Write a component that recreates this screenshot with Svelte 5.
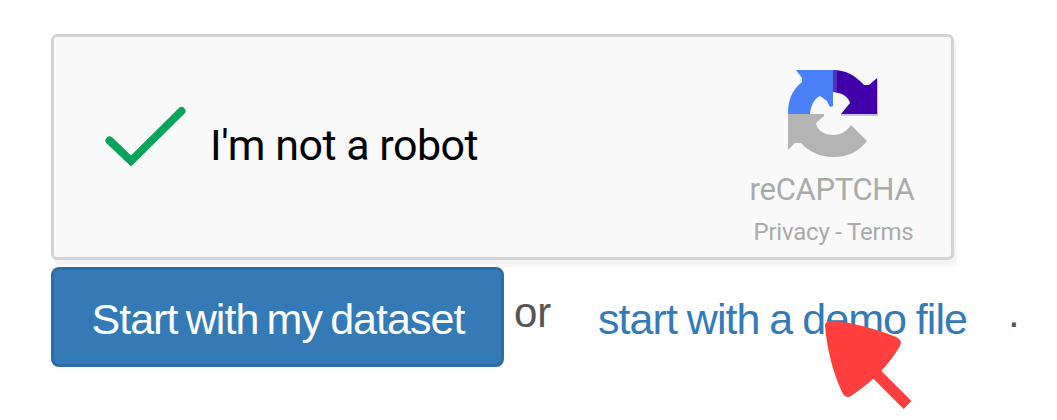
<script>
  const brand = 'reCAPTCHA';
</script>

<main>
  <section class="captcha">
    <svg class="check" width="90" height="72" viewBox="0 0 90 72" aria-hidden="true">
      <path d="M7.500 36.500L29 57L79.500 7" />
    </svg>
    <span class="label">I'm not a robot</span>
    <div class="brand">
      <svg class="logo" width="92" height="90" viewBox="0 0 92 90" aria-hidden="true">
        <path fill="#4a80f8" d="M9 0H46V36L43 37L40 31L33 26C27 29 24 35 23 44H1C1 30 5 20 15 12L15 8Z" />
        <path fill="#4100aa" d="M46 0C58 0 68 5 77 15H82L90 8V44H54L63 33C61 26 55 23 46 22Z" />
        <path fill="#c9bfdf" d="M54 44H90V46H54ZM90 9H91V46H90Z" />
        <path fill="#5a4cc4" d="M46 0H50V22H46Z" opacity=".65" />
        <path fill="#b4b4b4" d="M1 44H37V46L29 53C30 61 38 65 46 65C54 65 60 61 64 55L80 71C71 82 61 87 47 87C32 87 21 81 14 73H8L1 80Z" />
      </svg>
      <span class="name">{brand}</span>
      <span class="legal">Privacy - Terms</span>
    </div>
  </section>
  <div class="actions">
    <button>Start with my dataset</button>
    <span class="or">or</span>
    <a href="#demo">start with a demo file</a>
    <span class="dot">.</span>
  </div>
  <svg class="pointer" width="92" height="92" viewBox="0 0 92 92" aria-hidden="true">
    <path d="M7 1C28 2 53 9 72 17Q79 20 76 26C65 45 48 62 27 76Q21 79 18 72C8 50 3 28 1 6Q1 1 7 1Z" />
    <path d="M51 52.500L83.500 85" />
  </svg>
</main>

<style>
  :global(body) { margin: 0; background: #fff; }
  main {
    position: relative;
    box-sizing: border-box;
    width: 1057px;
    height: 420px;
    padding: 34px 0 0 51px;
    overflow: hidden;
    font-family: "Liberation Sans", Arial, sans-serif;
  }
  .captcha {
    box-sizing: border-box;
    width: 903px;
    height: 226px;
    display: flex;
    border: 3px solid #d3d3d3;
    border-radius: 6px;
    background: #f9f9f9;
    box-shadow: 2px 4px 0 #f2f2f2, 3px 7px 0 #f8f8f8;
    font-family: Roboto, sans-serif;
  }
  .check { flex: none; margin: 67px 0 0 48px; }
  .check path { fill: none; stroke: #07a35a; stroke-width: 8; stroke-linecap: round; }
  .label {
    width: 300px;
    margin: 83px 0 0 18px;
    font-size: 43px;
    line-height: 50px;
    letter-spacing: -.5px;
    color: #000;
    white-space: nowrap;
  }
  .brand {
    width: 168px;
    margin: 33px 0 0 239px;
    display: flex;
    flex-direction: column;
    align-items: center;
    color: #aaa;
    white-space: nowrap;
  }
  .logo { flex: none; }
  .name { margin: 12px 2px 0 0; font-size: 31px; line-height: 36px; letter-spacing: -.3px; }
  .legal { margin: 10px 0 0 1px; font-size: 24px; line-height: 28px; letter-spacing: -.2px; }
  .actions { display: flex; height: 100px; margin-top: 7px; font-size: 43px; line-height: 50px; white-space: nowrap; }
  button {
    box-sizing: border-box;
    width: 453px;
    height: 100px;
    padding: 3px 0 0 1px;
    border: 3px solid #2e6da4;
    border-radius: 8px;
    background: #337ab7;
    color: #fff;
    font: inherit;
    letter-spacing: -.95px;
    word-spacing: -2.8px;
  }
  .or { width: 84px; margin: 21px 0 0 10px; color: #555; font-size: 42px; }
  a { width: 410px; margin-top: 27px; color: #337ab7; text-decoration: none; letter-spacing: -.95px; word-spacing: -1.1px; }
  .dot { margin-top: 21px; font-size: 42px; color: #555; }
  .pointer { position: absolute; left: 824px; top: 320px; }
  .pointer path:first-child { fill: #ff3e3e; }
  .pointer path:last-child { stroke: #ff3e3e; stroke-width: 11; }
</style>
